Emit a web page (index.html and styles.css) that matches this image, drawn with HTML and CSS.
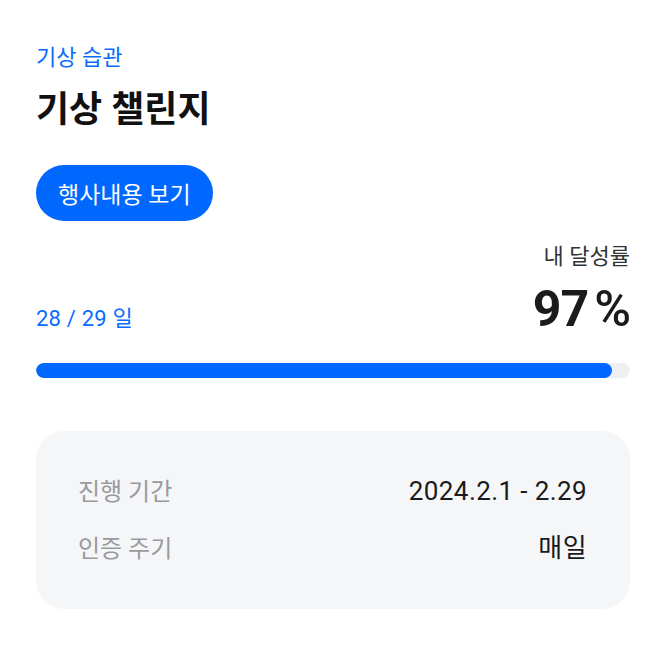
FILE: index.html
```html
<!DOCTYPE html>
<html lang="ko">
<head>
<meta charset="utf-8">
<link rel="stylesheet" href="styles.css">
</head>
<body>
<main class="page">
  <div class="category">기상 습관</div>
  <h1 class="title">기상 챌린지</h1>
  <button class="cta">행사내용 보기</button>
  <section class="stats">
    <div class="days">28 / 29 일</div>
    <div class="rate">
      <div class="rate-label">내 달성률</div>
      <div class="rate-value">97<span class="pct">%</span></div>
    </div>
  </section>
  <div class="bar"><div class="bar-fill" style="width:97%"></div></div>
  <section class="info">
    <div class="row"><span class="label">진행 기간</span><span class="value">2024.2.1 - 2.29</span></div>
    <div class="row"><span class="label">인증 주기</span><span class="value">매일</span></div>
  </section>
</main>
</body>
</html>
```
FILE: styles.css
```css
* { box-sizing: border-box; }
html, body { margin: 0; background: #fff; }
body {
  font-family: Roboto, "Noto Sans CJK KR", sans-serif;
  color: #191919;
}
.page {
  width: 654px;
  padding: 42px 24px 0 36px;
  display: flex;
  flex-direction: column;
  align-items: flex-start;
}
.category {
  color: #0a6cff;
  font-size: 22px;
  line-height: 32px;
}
.title {
  margin: 14px 0 0;
  font-size: 36px;
  font-weight: 700;
  line-height: 44px;
  color: #111;
}
.cta {
  margin-top: 33px;
  height: 56px;
  padding: 0 22px;
  border: 0;
  border-radius: 28px;
  background: #0068ff;
  color: #fff;
  font-family: inherit;
  font-size: 23px;
}
.stats {
  margin-top: 20px;
  width: 100%;
  display: flex;
  justify-content: space-between;
  align-items: last baseline;
}
.days {
  color: #0a6cff;
  font-size: 22px;
  line-height: 28px;
  letter-spacing: 0.2px;
}
.rate {
  display: flex;
  flex-direction: column;
  align-items: flex-end;
}
.rate-label {
  font-size: 22px;
  line-height: 32px;
  color: #333;
}
.rate-value {
  margin-top: 10px;
  font-size: 50px;
  font-weight: 700;
  line-height: 52px;
  letter-spacing: -1px;
  color: #1b1b1b;
}
.pct { margin-left: 6px; font-weight: 500; }
.bar {
  margin-top: 28px;
  width: 100%;
  height: 15px;
  border-radius: 8px;
  background: #eeeff1;
  overflow: hidden;
}
.bar-fill {
  height: 100%;
  border-radius: 8px;
  background: #0068ff;
}
.info {
  margin-top: 53px;
  width: 100%;
  background: #f5f6f8;
  border-radius: 28px;
  padding: 44px 43px 44px 42px;
  display: flex;
  flex-direction: column;
  gap: 24px;
}
.row {
  display: flex;
  justify-content: space-between;
  align-items: baseline;
  line-height: 32px;
}
.label { color: #9a9a9e; font-size: 24px; }
.value { color: #1a1a1a; font-size: 26px; letter-spacing: 0.4px; }
```
